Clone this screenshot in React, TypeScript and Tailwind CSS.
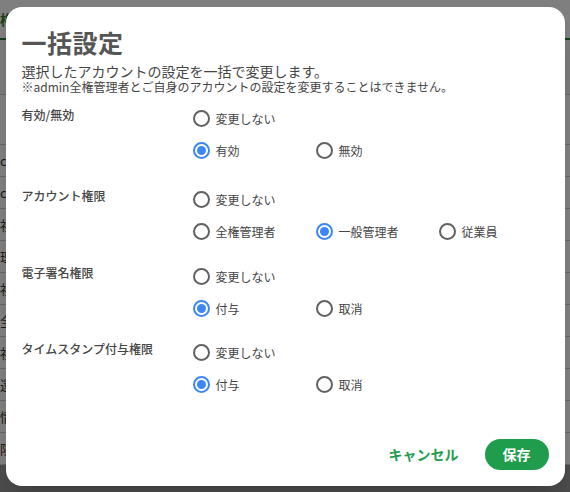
import { useState } from "react";

type Opt = { value: string; label: string };

const SECTIONS: { key: string; title: string; opts: Opt[]; initial: string; gap: string }[] = [
  {
    key: "active",
    title: "有効/無効",
    opts: [
      { value: "on", label: "有効" },
      { value: "off", label: "無効" },
    ],
    initial: "on",
    gap: "mb-[17px]",
  },
  {
    key: "role",
    title: "アカウント権限",
    opts: [
      { value: "full", label: "全権管理者" },
      { value: "general", label: "一般管理者" },
      { value: "staff", label: "従業員" },
    ],
    initial: "general",
    gap: "mb-[13px]",
  },
  {
    key: "sign",
    title: "電子署名権限",
    opts: [
      { value: "grant", label: "付与" },
      { value: "revoke", label: "取消" },
    ],
    initial: "grant",
    gap: "mb-[12px]",
  },
  {
    key: "stamp",
    title: "タイムスタンプ付与権限",
    opts: [
      { value: "grant", label: "付与" },
      { value: "revoke", label: "取消" },
    ],
    initial: "grant",
    gap: "",
  },
];

function Radio({ checked, label, onClick }: { checked: boolean; label: string; onClick: () => void }) {
  return (
    <button type="button" onClick={onClick} className="flex w-[123px] shrink-0 items-center gap-[6px] text-left">
      <span
        className={
          checked
            ? "flex h-[17px] w-[17px] shrink-0 items-center justify-center rounded-full border-2 border-[#3d86f5]"
            : "flex h-[17px] w-[17px] shrink-0 items-center justify-center rounded-full border-2 border-[#616161]"
        }
      >
        {checked && <span className="h-[9px] w-[9px] rounded-full bg-[#3d86f5]" />}
      </span>
      <span className="whitespace-nowrap text-[12px] text-[#444]">{label}</span>
    </button>
  );
}

export default function App() {
  const [vals, setVals] = useState<Record<string, string>>(
    Object.fromEntries(SECTIONS.map((s) => [s.key, s.initial]))
  );
  const set = (k: string, v: string) => setVals((p) => ({ ...p, [k]: v }));

  return (
    <div
      className="relative h-[492px] w-[570px] overflow-hidden bg-[#ececec]"
      style={{ fontFamily: '"Noto Sans CJK JP", "Noto Sans", sans-serif' }}
    >
      {/* page behind the modal */}
      <div className="flex h-full flex-col">
        <div className="flex h-[40px] items-end border-b-2 border-[#2e7d32] bg-white px-0 pb-2 text-[14px] font-bold text-[#2e7d32]">
          権限
        </div>
        <div className="h-[55px] border-b border-[#ccc] bg-[#f4f4f4]" />
        <div className="h-[50px] border-b border-[#ccc] bg-white" />
        {["co", "co", "社", "理", "社", "全", "社", "還", "情", "限"].map((t, i) => (
          <div key={i} className="flex h-[32px] items-center border-b border-[#ccc] bg-white text-[13px] text-[#333]">
            {t}
          </div>
        ))}
        <div className="flex-1 bg-[#999]" />
      </div>

      {/* backdrop + dialog */}
      <div className="absolute inset-0 flex items-center justify-center bg-black/50 p-[6px]">
        <div className="flex h-[479px] w-[559px] flex-col rounded-2xl bg-white px-4 pt-[19px] pb-4 shadow-xl">
          <h2 className="text-[25px] font-bold leading-[32px] tracking-[0.5px] text-[#555]">一括設定</h2>
          <p className="mt-[5px] text-[14px] leading-[17px] text-[#444]">選択したアカウントの設定を一括で変更します。</p>
          <p className="text-[12px] leading-[14px] text-[#444]">
            ※admin全権管理者とご自身のアカウントの設定を変更することはできません。
          </p>

          <div className="mt-[9px]">
            {SECTIONS.map((s) => (
              <div key={s.key} className={`flex ${s.gap}`}>
                <div className="w-[171px] shrink-0 pt-[4px] text-[12px] font-medium leading-[16px] text-[#444]">
                  {s.title}
                </div>
                <div className="flex flex-col">
                  <div className="flex h-[32px] items-center">
                    <Radio checked={vals[s.key] === "keep"} label="変更しない" onClick={() => set(s.key, "keep")} />
                  </div>
                  <div className="flex h-[32px] items-center">
                    {s.opts.map((o) => (
                      <Radio
                        key={o.value}
                        checked={vals[s.key] === o.value}
                        label={o.label}
                        onClick={() => set(s.key, o.value)}
                      />
                    ))}
                  </div>
                </div>
              </div>
            ))}
          </div>

          <div className="mt-auto flex items-center justify-end gap-[10px]">
            <button type="button" className="px-4 py-1 text-[14px] font-bold text-[#1f9d4c]">
              キャンセル
            </button>
            <button
              type="button"
              className="h-[31px] w-[64px] rounded-full bg-[#1f9d4c] text-[14px] font-bold text-white"
            >
              保存
            </button>
          </div>
        </div>
      </div>
    </div>
  );
}
